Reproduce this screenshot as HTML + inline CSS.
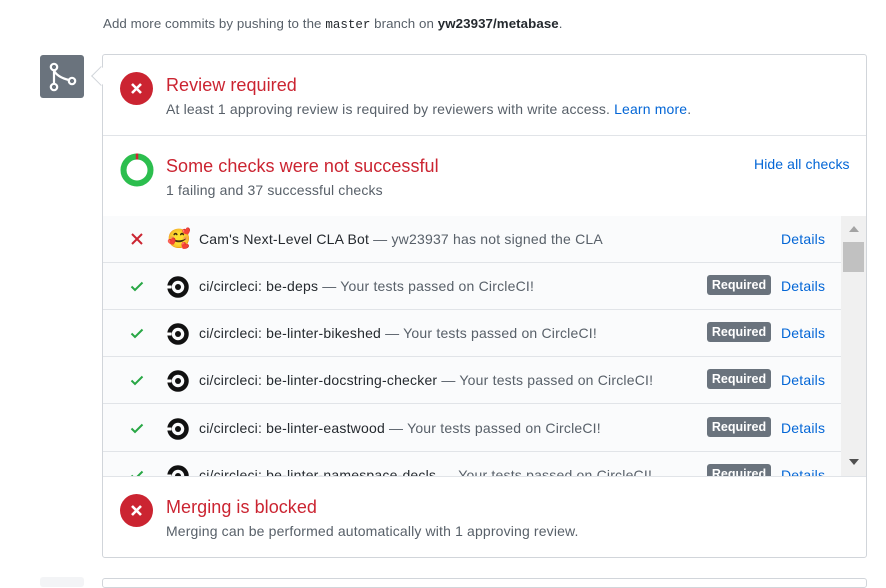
<!DOCTYPE html>
<html><head><meta charset="utf-8">
<style>
*{box-sizing:border-box;margin:0;padding:0}
body{width:886px;height:581px;overflow:hidden;background:#fff;font-family:"Liberation Sans",sans-serif;color:#24292e;position:relative;font-size:14px}
.abs{position:absolute}
.top{left:103px;top:16px;font-size:13.3px;color:#586069;letter-spacing:0.08px}
.top code{font-family:"Liberation Mono",monospace;color:#24292e;font-size:12.5px;letter-spacing:0}
.top b{color:#24292e}
.octo{left:40px;top:55px;width:44px;height:43px;background:#6a737d;border-radius:3px}
.box{left:102px;top:54px;width:765px;height:504px;border:1px solid #d1d5da;border-radius:3px;background:#fff}
.arrow{left:94px;top:69px;width:14px;height:14px;background:#fff;border-left:1px solid #d1d5da;border-bottom:1px solid #d1d5da;transform:rotate(45deg)}
.t{color:#cb2431;font-size:18px;letter-spacing:0.05px}
.s{color:#586069;font-size:14px;letter-spacing:0.15px}
.a{color:#0366d6}
.sep{left:103px;width:763px;height:1px;background:#e1e4e8}
.list{left:103px;top:216px;width:738px;height:260px;background:#fafbfc;overflow:hidden}
.row{position:absolute;left:0;width:738px;height:47px;border-bottom:1px solid #e1e4e8}
.row .ic{position:absolute;left:27px;top:16px;width:14px;height:14px}
.row .av{position:absolute;left:64px;top:13px;width:22px;height:22px}
.row .tx{position:absolute;left:96px;top:15px;font-size:14px;color:#586069;white-space:nowrap;letter-spacing:0.2px}
.row .tx b{color:#24292e;font-weight:normal}
.req{position:absolute;left:604px;top:12px;width:64px;height:20px;background:#6a737d;color:#fff;border-radius:3px;font-size:12.5px;font-weight:bold;text-align:center;line-height:20px}
.det{position:absolute;left:678px;top:15px;color:#0366d6;font-size:14px;letter-spacing:0.2px}
.sb{left:841px;top:216px;width:25px;height:260px;background:#f0f0f0}
</style></head><body>
<div class="abs top">Add more commits by pushing to the <code>master</code> branch on <b>yw23937/metabase</b>.</div>
<div class="abs octo"><svg width="44" height="43" viewBox="0 0 44 43"><g fill="none" stroke="#fff" stroke-width="2.2"><circle cx="14" cy="12" r="3.2"/><circle cx="14" cy="32" r="3.2"/><circle cx="32" cy="26" r="3.2"/><path d="M14 15.2V28.8M14 15.5Q17 22 28.8 25"/></g></svg></div>
<div class="abs box"></div>
<div class="abs arrow"></div>

<svg class="abs" style="left:120px;top:72px" width="33" height="33" viewBox="0 0 33 33"><circle cx="16.5" cy="16.5" r="16.5" fill="#cb2431"/><path d="M12 12L21 21M21 12L12 21" stroke="#fff" stroke-width="2.6"/></svg>
<div class="abs t" style="left:166px;top:75px">Review required</div>
<div class="abs s" style="left:166px;top:101px">At least 1 approving review is required by reviewers with write access. <span class="a">Learn more</span>.</div>
<div class="abs sep" style="top:135px"></div>

<div class="abs" style="left:120px;top:153px"><svg width="34" height="34" viewBox="0 0 34 34"><circle cx="17" cy="17" r="13.5" fill="none" stroke="#2cbe4e" stroke-width="6"/><path d="M17 0.5 V6.5" stroke="#cb2431" stroke-width="2.5"/></svg></div>
<div class="abs t" style="left:166px;top:156px">Some checks were not successful</div>
<div class="abs s" style="left:166px;top:182px">1 failing and 37 successful checks</div>
<div class="abs a" style="left:754px;top:156px;font-size:14px;letter-spacing:0.1px">Hide all checks</div>
<div class="abs sep" style="top:216px"></div>

<div class="abs list">
 <div class="row" style="top:0"><svg class="ic" viewBox="0 0 14 14"><path d="M2 2L12 12M12 2L2 12" stroke="#cb2431" stroke-width="2"/></svg><span class="av" style="font-size:19px;line-height:22px">🥰</span><span class="tx"><b>Cam's Next-Level CLA Bot</b> — yw23937 has not signed the CLA</span><span class="det">Details</span></div>
 <div class="row" style="top:47px"><svg class="ic" viewBox="0 0 14 14"><path d="M1.5 7.5L5 11L12.5 3.5" fill="none" stroke="#28a745" stroke-width="2"/></svg><svg class="av" viewBox="0 0 22 22"><circle cx="11" cy="11" r="8.5" fill="none" stroke="#111" stroke-width="4.5"/><circle cx="11" cy="11" r="3" fill="#111"/><rect x="0" y="9.5" width="4.5" height="3" fill="#fff"/></svg><span class="tx"><b>ci/circleci: be-deps</b> — Your tests passed on CircleCI!</span><span class="req">Required</span><span class="det">Details</span></div>
 <div class="row" style="top:94px"><svg class="ic" viewBox="0 0 14 14"><path d="M1.5 7.5L5 11L12.5 3.5" fill="none" stroke="#28a745" stroke-width="2"/></svg><svg class="av" viewBox="0 0 22 22"><circle cx="11" cy="11" r="8.5" fill="none" stroke="#111" stroke-width="4.5"/><circle cx="11" cy="11" r="3" fill="#111"/><rect x="0" y="9.5" width="4.5" height="3" fill="#fff"/></svg><span class="tx"><b>ci/circleci: be-linter-bikeshed</b> — Your tests passed on CircleCI!</span><span class="req">Required</span><span class="det">Details</span></div>
 <div class="row" style="top:141px"><svg class="ic" viewBox="0 0 14 14"><path d="M1.5 7.5L5 11L12.5 3.5" fill="none" stroke="#28a745" stroke-width="2"/></svg><svg class="av" viewBox="0 0 22 22"><circle cx="11" cy="11" r="8.5" fill="none" stroke="#111" stroke-width="4.5"/><circle cx="11" cy="11" r="3" fill="#111"/><rect x="0" y="9.5" width="4.5" height="3" fill="#fff"/></svg><span class="tx"><b>ci/circleci: be-linter-docstring-checker</b> — Your tests passed on CircleCI!</span><span class="req">Required</span><span class="det">Details</span></div>
 <div class="row" style="top:189px"><svg class="ic" viewBox="0 0 14 14"><path d="M1.5 7.5L5 11L12.5 3.5" fill="none" stroke="#28a745" stroke-width="2"/></svg><svg class="av" viewBox="0 0 22 22"><circle cx="11" cy="11" r="8.5" fill="none" stroke="#111" stroke-width="4.5"/><circle cx="11" cy="11" r="3" fill="#111"/><rect x="0" y="9.5" width="4.5" height="3" fill="#fff"/></svg><span class="tx"><b>ci/circleci: be-linter-eastwood</b> — Your tests passed on CircleCI!</span><span class="req">Required</span><span class="det">Details</span></div>
 <div class="row" style="top:236px"><svg class="ic" viewBox="0 0 14 14"><path d="M1.5 7.5L5 11L12.5 3.5" fill="none" stroke="#28a745" stroke-width="2"/></svg><svg class="av" viewBox="0 0 22 22"><circle cx="11" cy="11" r="8.5" fill="none" stroke="#111" stroke-width="4.5"/><circle cx="11" cy="11" r="3" fill="#111"/><rect x="0" y="9.5" width="4.5" height="3" fill="#fff"/></svg><span class="tx"><b>ci/circleci: be-linter-namespace-decls</b> — Your tests passed on CircleCI!</span><span class="req">Required</span><span class="det">Details</span></div>
</div>
<div class="abs sb"><div class="abs" style="left:8px;top:10px;width:0;height:0;border-left:5px solid transparent;border-right:5px solid transparent;border-bottom:6px solid #a3a3a3"></div><div class="abs" style="left:2px;top:26px;width:21px;height:30px;background:#c1c1c1"></div><div class="abs" style="left:8px;top:243px;width:0;height:0;border-left:5px solid transparent;border-right:5px solid transparent;border-top:6px solid #505050"></div></div>
<div class="abs sep" style="top:476px"></div>

<svg class="abs" style="left:120px;top:494px" width="33" height="33" viewBox="0 0 33 33"><circle cx="16.5" cy="16.5" r="16.5" fill="#cb2431"/><path d="M12 12L21 21M21 12L12 21" stroke="#fff" stroke-width="2.6"/></svg>
<div class="abs t" style="left:166px;top:497px">Merging is blocked</div>
<div class="abs s" style="left:166px;top:523px">Merging can be performed automatically with 1 approving review.</div>

<div class="abs" style="left:40px;top:577px;width:44px;height:10px;background:#f3f4f6;border-radius:3px"></div>
<div class="abs" style="left:102px;top:578px;width:765px;height:10px;border:1px solid #d1d5da;border-radius:3px"></div>
</body></html>
